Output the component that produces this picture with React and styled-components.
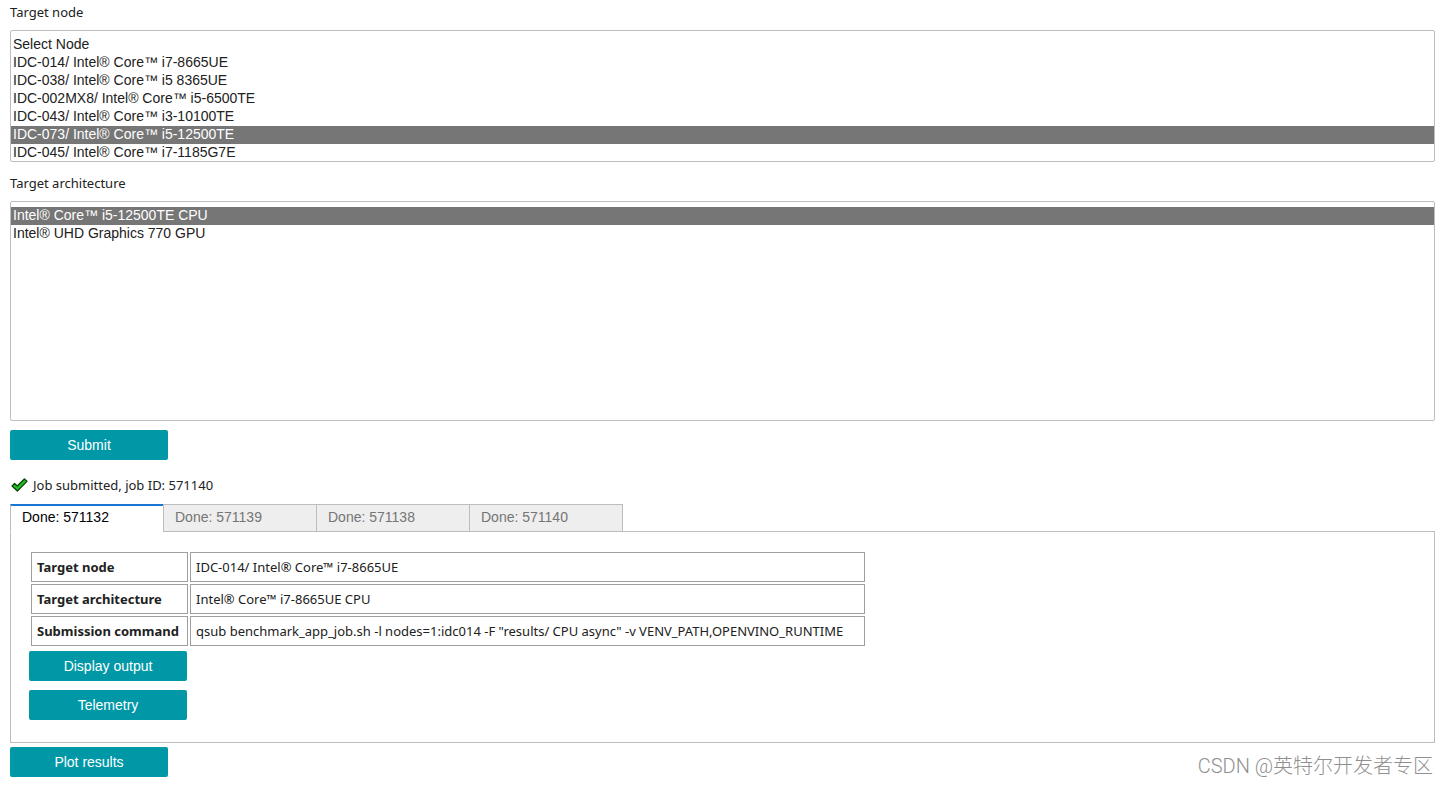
import React, { useState } from "react";
import styled, { createGlobalStyle } from "styled-components";

const GlobalStyle = createGlobalStyle`
  * {
    box-sizing: border-box;
  }
  body {
    margin: 0;
    background: #ffffff;
    color: #212121;
    font-family: "Noto Sans", "Open Sans", sans-serif;
    font-size: 13px;
    line-height: 20px;
  }
`;

const Page = styled.main`
  display: flex;
  flex-direction: column;
  padding: 2px 13px 8px 10px;
`;

const Fields = styled.div`
  display: flex;
  flex-direction: column;
  gap: 11px;
  margin-bottom: 9px;
`;

const Field = styled.div`
  display: flex;
  flex-direction: column;
  gap: 8px;
`;

const ListBox = styled.select`
  width: 100%;
  height: ${(props) => props.$height}px;
  padding: 5px 0 0;
  border: 1px solid #bdbdbd;
  border-radius: 2px;
  background: #ffffff;
  color: #212121;
  font-family: "Liberation Sans", Arial, sans-serif;
  font-size: 14px;
  outline: none;
  overflow: hidden;
`;

const Option = styled.option`
  height: 18px;
  min-height: 18px;
  padding: 0 2px;
  line-height: 18px;

  &:checked {
    background: #767676 linear-gradient(#767676, #767676);
    color: #ffffff;
    -webkit-text-fill-color: #ffffff;
  }
`;

const Button = styled.button`
  width: 158px;
  height: 30px;
  padding: 0 10px;
  border: none;
  border-radius: 2px;
  background: #0097a7;
  color: #ffffff;
  font-family: "Liberation Sans", Arial, sans-serif;
  font-size: 14px;
  cursor: pointer;
`;

const Status = styled.div`
  display: flex;
  align-items: center;
  gap: 5px;
  margin: 15px 0 9px;
`;

const CheckIcon = styled.svg`
  width: 17px;
  height: 14px;
  margin-left: 1px;
`;

const TabBar = styled.div`
  display: flex;
  padding-right: 1px;
`;

const Tab = styled.button`
  width: 154px;
  height: 28px;
  margin: 0 -1px -1px 0;
  padding: 0 11px 3px;
  border: 1px solid #bdbdbd;
  border-top-color: ${(props) => (props.$active ? "#1976d2" : "#bdbdbd")};
  border-bottom-color: ${(props) => (props.$active ? "#ffffff" : "#bdbdbd")};
  background: ${(props) => (props.$active ? "#ffffff" : "#eeeeee")};
  box-shadow: ${(props) => (props.$active ? "inset 0 1px #1976d2" : "none")};
  color: ${(props) => (props.$active ? "#000000" : "#757575")};
  font-family: "Liberation Sans", Arial, sans-serif;
  font-size: 14px;
  text-align: left;
  cursor: pointer;
  z-index: 1;
`;

const Panel = styled.section`
  display: flex;
  flex-direction: column;
  align-items: flex-start;
  padding: 18px 18px 22px;
  border: 1px solid #bdbdbd;
`;

const JobTable = styled.table`
  border-spacing: 2px;
  margin-bottom: 3px;
`;

const cell = `
  height: 30px;
  padding: 0 5px;
  border: 1px solid #9e9e9e;
  text-align: left;
  white-space: nowrap;
`;

const HeadCell = styled.th`
  ${cell}
  min-width: 157px;
  font-weight: 700;
`;

const Cell = styled.td`
  ${cell}
  min-width: 675px;
`;

const Actions = styled.div`
  display: flex;
  flex-direction: column;
  gap: 9px;
`;

const Footer = styled.footer`
  display: flex;
  justify-content: space-between;
  align-items: center;
  margin-top: 4px;
`;

const Credit = styled.span`
  margin-right: 2px;
  padding-top: 8px;
  color: #8f8f8f;
  font-family: Roboto, "Noto Sans CJK SC", sans-serif;
  font-size: 20px;
  font-weight: 300;
  line-height: 22px;
`;

const nodes = [
  "Select Node",
  "IDC-014/ Intel® Core™ i7-8665UE",
  "IDC-038/ Intel® Core™ i5 8365UE",
  "IDC-002MX8/ Intel® Core™ i5-6500TE",
  "IDC-043/ Intel® Core™ i3-10100TE",
  "IDC-073/ Intel® Core™ i5-12500TE",
  "IDC-045/ Intel® Core™ i7-1185G7E",
];

const architectures = ["Intel® Core™ i5-12500TE CPU", "Intel® UHD Graphics 770 GPU"];

const jobs = ["571132", "571139", "571138", "571140"];

const details = [
  ["Target node", "IDC-014/ Intel® Core™ i7-8665UE"],
  ["Target architecture", "Intel® Core™ i7-8665UE CPU"],
  [
    "Submission command",
    'qsub benchmark_app_job.sh -l nodes=1:idc014 -F "results/ CPU async" -v VENV_PATH,OPENVINO_RUNTIME',
  ],
];

const App = () => {
  const [node, setNode] = useState(nodes[5]);
  const [architecture, setArchitecture] = useState(architectures[0]);
  const [activeJob, setActiveJob] = useState(jobs[0]);

  return (
    <>
      <GlobalStyle />
      <Page>
        <Fields>
          <Field>
            <label htmlFor="node">Target node</label>
            <ListBox id="node" size={7} $height={132} value={node} onChange={(e) => setNode(e.target.value)}>
              {nodes.map((item) => (
                <Option key={item}>{item}</Option>
              ))}
            </ListBox>
          </Field>
          <Field>
            <label htmlFor="architecture">Target architecture</label>
            <ListBox
              id="architecture"
              size={12}
              $height={220}
              value={architecture}
              onChange={(e) => setArchitecture(e.target.value)}
            >
              {architectures.map((item) => (
                <Option key={item}>{item}</Option>
              ))}
            </ListBox>
          </Field>
        </Fields>
        <Button type="button">Submit</Button>
        <Status>
          <CheckIcon viewBox="0 0 17 14" aria-hidden="true">
            <path
              d="M1 8 L3.6 5.4 L6.2 8 L13.4 1 L16 3.3 L6.4 13 Z"
              fill="#1fc01f"
              stroke="#0b3d0b"
              strokeWidth="1.2"
              strokeLinejoin="round"
            />
          </CheckIcon>
          <span>Job submitted, job ID: 571140</span>
        </Status>
        <TabBar role="tablist">
          {jobs.map((job) => (
            <Tab
              key={job}
              type="button"
              role="tab"
              aria-selected={job === activeJob}
              $active={job === activeJob}
              onClick={() => setActiveJob(job)}
            >
              Done: {job}
            </Tab>
          ))}
        </TabBar>
        <Panel role="tabpanel">
          <JobTable>
            <tbody>
              {details.map(([name, value]) => (
                <tr key={name}>
                  <HeadCell scope="row">{name}</HeadCell>
                  <Cell>{value}</Cell>
                </tr>
              ))}
            </tbody>
          </JobTable>
          <Actions>
            <Button type="button">Display output</Button>
            <Button type="button">Telemetry</Button>
          </Actions>
        </Panel>
        <Footer>
          <Button type="button">Plot results</Button>
          <Credit>CSDN @英特尔开发者专区</Credit>
        </Footer>
      </Page>
    </>
  );
};

export default App;
